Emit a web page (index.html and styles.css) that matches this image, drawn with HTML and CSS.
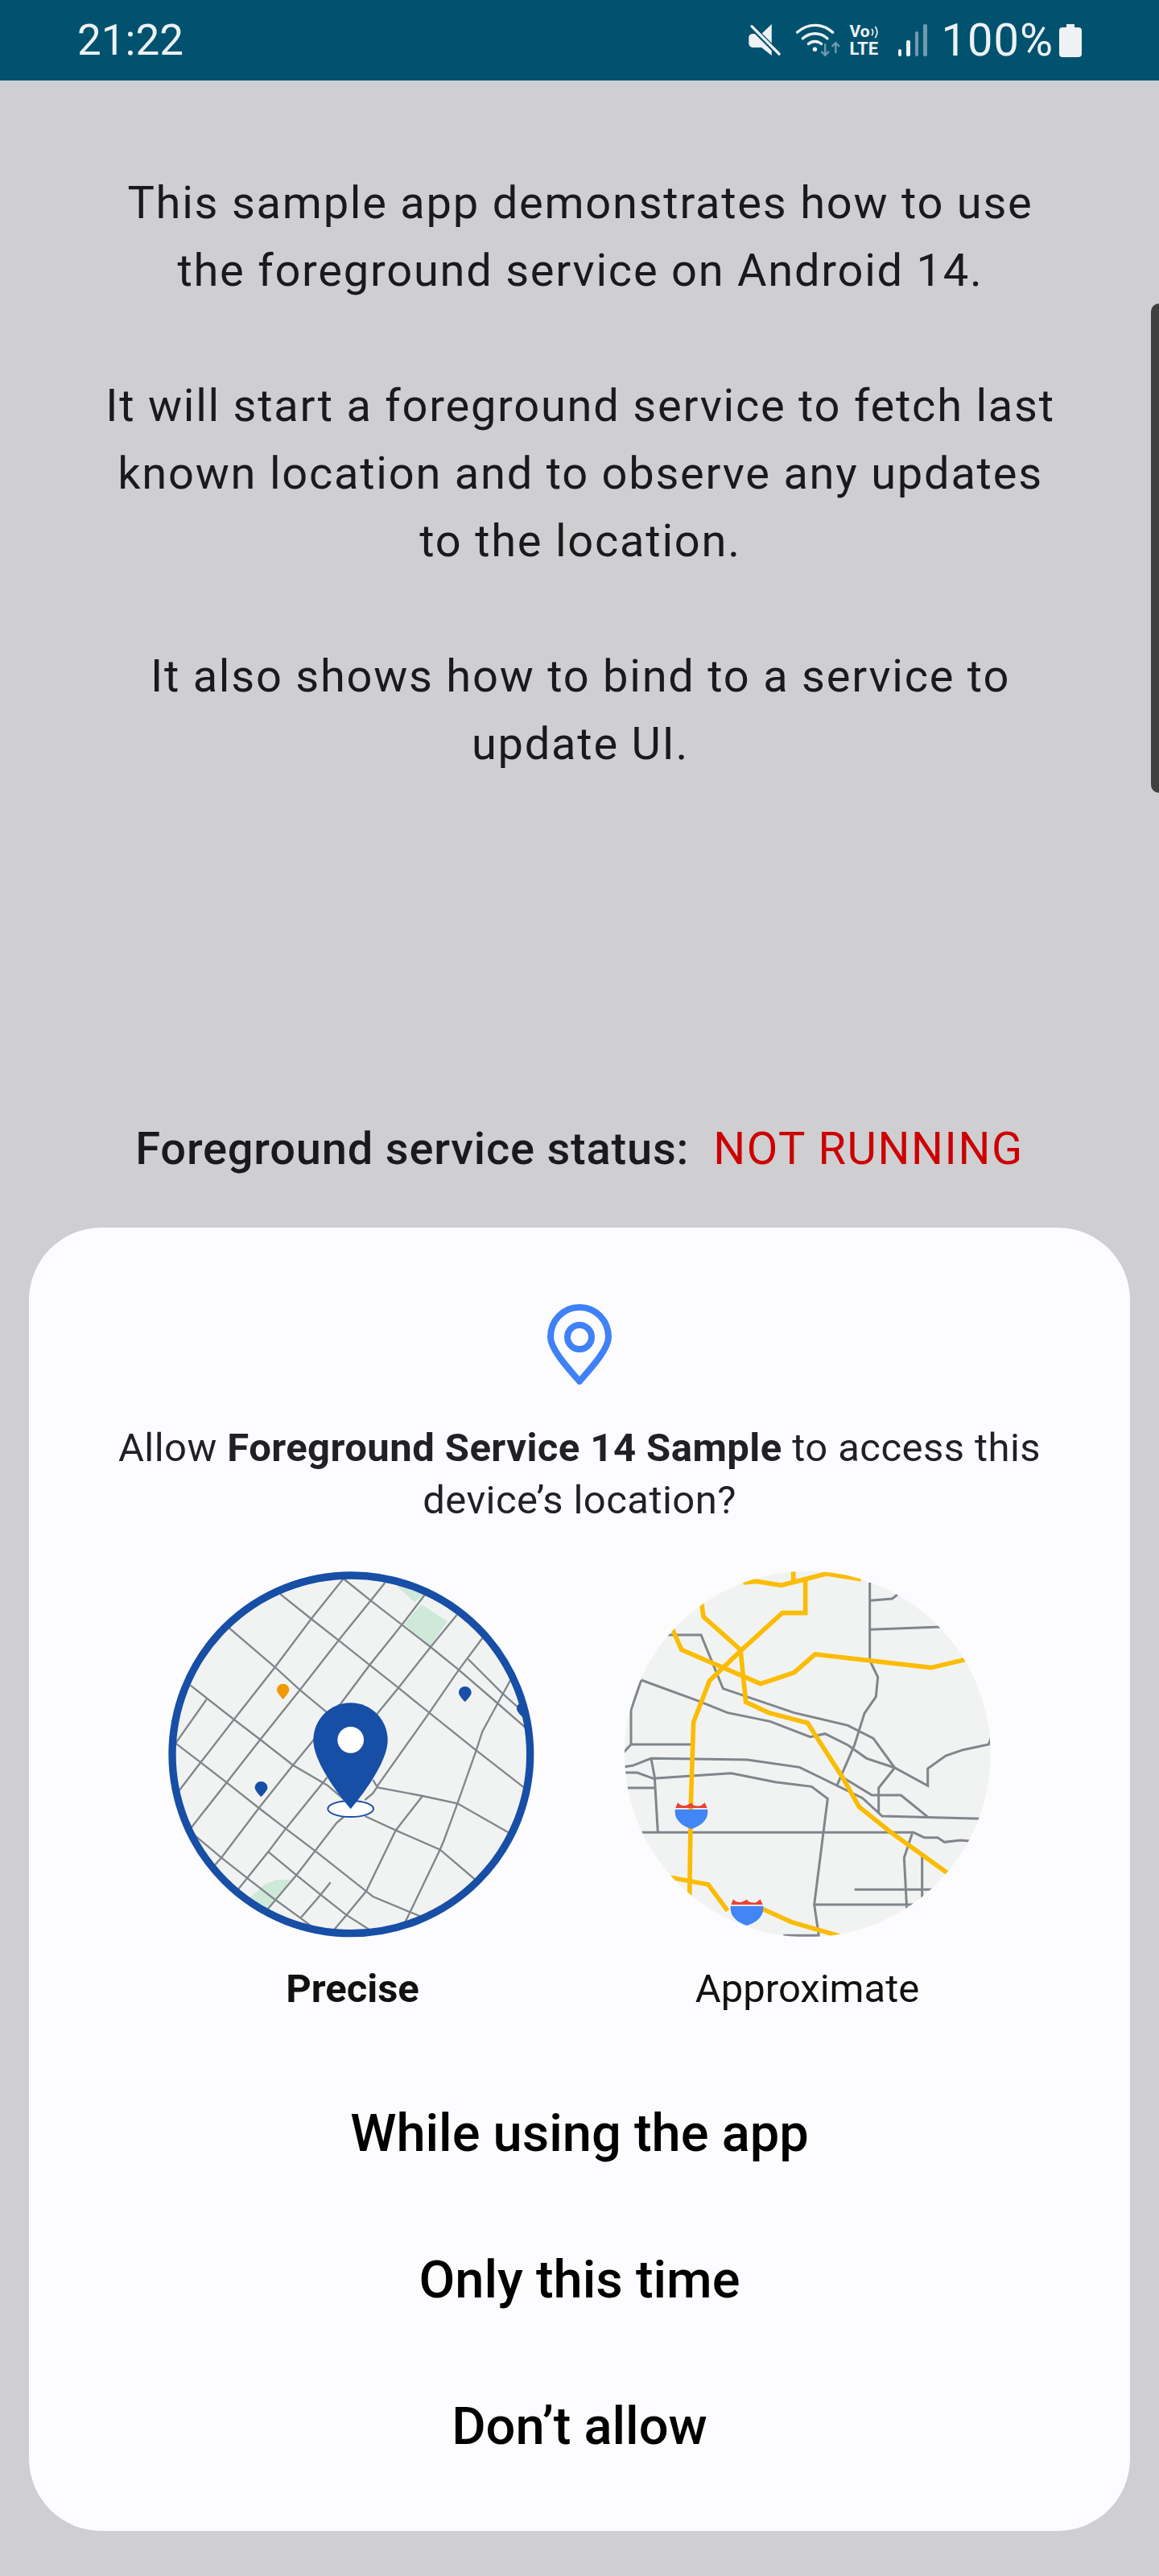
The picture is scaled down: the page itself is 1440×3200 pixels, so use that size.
FILE: index.html
```html
<!DOCTYPE html>
<html lang="en">
<head>
<meta charset="utf-8">
<title>Foreground Service 14 Sample</title>
<link rel="stylesheet" href="styles.css">
</head>
<body>
<div class="screen">
  <header class="statusbar">
    <span class="clock">21:22</span>
    <div class="status-icons">
      <svg class="ic-mute" viewBox="140 90 130 125"><path fill="#eef2f5" d="M230 92V210L192 180H160C150 180 144 172 144 164V142C144 134 150 128 160 128H192Z"/><path d="M150 98L258 205" stroke="#00526f" stroke-width="20"/><path d="M155 100L258 204" stroke="#eef2f5" stroke-width="10" stroke-linecap="round"/></svg>
      <svg class="ic-wifi" viewBox="320 90 170 125"><g fill="none" stroke="#eef2f5" stroke-width="10" stroke-linecap="round"><path d="M325 123C365 88 415 88 456 123"/><path d="M345 146C372 122 410 122 436 146"/><path d="M366 166C380 154 400 154 414 166"/></g><circle cx="390" cy="186" r="8" fill="#eef2f5"/><g fill="none" stroke="#6f9bb0" stroke-width="7"><path d="M428 165V208M414 194L428 208L442 194"/><path d="M467 200V162M453 176L467 162L481 176"/></g></svg>
      <div class="volte">
        <div class="volte-top"><span>Vo</span><svg class="ic-arcs" viewBox="0 0 14 20"><path d="M2 5C4 8 4 12 2 15M8 1C12 7 12 13 8 19" fill="none" stroke="#eef2f5" stroke-width="2.4" stroke-linecap="round"/></svg></div>
        <span class="volte-lte">LTE</span>
      </div>
      <div class="signal">
        <i class="bar bar-1"></i><i class="bar bar-2"></i><i class="bar bar-3"></i><i class="bar bar-4"></i>
      </div>
      <span class="battery-text">100%</span>
      <svg class="ic-battery" viewBox="0 0 28 41"><path fill="#eef2f5" d="M9 0H19V4H24C26.500 4 28 5.500 28 8V37C28 39.500 26.500 41 24 41H4C1.500 41 0 39.500 0 37V8C0 5.500 1.500 4 4 4H9Z"/></svg>
    </div>
  </header>

  <main class="content">
    <p class="intro">This sample app demonstrates how to use<br>the foreground service on Android 14.</p>
    <p class="intro">It will start a foreground service to fetch last<br>known location and to observe any updates<br>to the location.</p>
    <p class="intro">It also shows how to bind to a service to<br>update UI.</p>
    <p class="status"><span class="status-label">Foreground service status:</span><span class="status-value">NOT RUNNING</span></p>
  </main>

  <i class="scroll-handle"></i>

  <section class="dialog">
    <svg class="dialog-icon" viewBox="0 0 82 100"><path fill="none" stroke="#3f81f7" stroke-width="8" stroke-linejoin="round" d="M41 4C20 4 5 21 5 41C5 57 30 83 41 96C52 83 77 57 77 41C77 21 62 4 41 4Z"/><circle cx="41" cy="41" r="15" fill="none" stroke="#3f81f7" stroke-width="8"/></svg>
    <p class="dialog-title">Allow <b>Foreground Service 14 Sample</b> to access this<br>device’s location?</p>
    <div class="choices">
      <div class="choice">
        <svg class="map" viewBox="0 0 1500 1500">
          <defs><clipPath id="clipP"><circle cx="739" cy="745" r="667"/></clipPath></defs>
          <circle cx="739" cy="745" r="667" fill="#f1f3f2"/>
          <g clip-path="url(#clipP)">
            <g fill="#cfe9d9">
              <path d="M895 105L1012 150L975 178Z"/>
              <path d="M1000 185L1098 250L1035 340L935 260Z"/>
              <path d="M350 1290L415 1230L460 1212L512 1212L430 1325Z"/>
            </g>
            <g fill="none" stroke="#80868b" stroke-width="7">
              <path d="M710 90L812 172L1035 345L1140 430L1285 555L1400 655"/>
              <path d="M475 148L590 240L692 320L808 412L915 497L1030 590L1205 730L1395 878"/>
              <path d="M285 275L455 420L548 505L650 590"/>
              <path d="M140 488L302 615L400 690L522 785L650 860L720 920"/>
              <path d="M80 700L178 775L275 850L395 945L495 1022L605 1105L795 1255L820 1275L1000 1350"/>
              <path d="M150 1042L255 1130L350 1205L440 1275L550 1355L590 1385"/>
              <path d="M430 1108L535 1195L625 1268L720 1343L810 1400"/>
              <path d="M1175 390L1305 520L1395 600"/>
              <path d="M710 90L590 240L455 420L302 615L178 775L90 890"/>
              <path d="M865 105L812 172L692 320L548 505L400 690L275 850L135 1028"/>
              <path d="M1020 142L928 262L808 412L600 690L522 785L395 945L255 1130L220 1170"/>
              <path d="M1133 225L1035 345L915 497L835 595M650 830L495 1022L430 1108L310 1258"/>
              <path d="M1228 312L1140 430L1030 590L835 865L820 840"/>
              <path d="M790 915L820 890L835 868L1005 900L1135 928L1335 1042"/>
              <path d="M200 540L80 710"/>
              <path d="M1340 455L1285 555L1228 660L1205 730L1135 928L1085 1065L1070 1100L955 1340L935 1380"/>
              <path d="M1005 900L905 1028L795 1255L722 1343L670 1405"/>
              <path d="M790 975L905 1028L1070 1100L1205 1215"/>
              <path d="M715 975L685 1000L535 1195L425 1325"/>
              <path d="M662 1222L625 1268L550 1355"/>
            </g>
            <path fill="#174ea6" d="M1378 552C1366 552 1356 562 1356 575C1356 587 1378 606 1378 606C1378 606 1400 587 1400 575C1400 562 1390 552 1378 552Z"/>
          </g>
          <circle cx="739" cy="745" r="667" fill="none" stroke="#174ea6" stroke-width="28"/>
          <path fill="#f29900" d="M485 482C472 482 462 492 462 505C462 517 485 540 485 540C485 540 508 517 508 505C508 492 498 482 485 482Z"/>
          <path fill="#174ea6" d="M1163 492C1150 492 1140 502 1140 515C1140 527 1163 549 1163 549C1163 549 1187 527 1187 515C1187 502 1176 492 1163 492Z"/>
          <path fill="#174ea6" d="M403 846C390 846 380 856 380 869C380 881 403 903 403 903C403 903 427 881 427 869C427 856 416 846 403 846Z"/>
          <ellipse cx="737" cy="948" rx="85" ry="30" fill="#fff" stroke="#174ea6" stroke-width="6"/>
          <path fill="#174ea6" d="M737 553C660 553 598 615 598 692C598 790 737 948 737 948C737 948 875 790 875 692C875 615 813 553 737 553Z"/>
          <circle cx="737" cy="691" r="49" fill="#fff"/>
        </svg>
        <span class="choice-label selected">Precise</span>
      </div>
      <div class="choice">
        <svg class="map" viewBox="0 0 1500 1500">
          <defs>
            <clipPath id="clipA"><circle cx="730" cy="744" r="682"/></clipPath>
            <g id="shield">
              <path fill="#ea4335" d="M238 945L246 925C256 936 268 938 278 935L297 926C304 938 322 940 334 935L347 925L356 945Z"/>
              <path fill="#4285f4" d="M236 950H358V960C358 990 332 1012 297 1023C262 1012 236 990 236 960Z"/>
            </g>
          </defs>
          <circle cx="730" cy="744" r="682" fill="#f1f3f2"/>
          <g clip-path="url(#clipA)">
            <g fill="none" stroke="#80868b" stroke-width="9">
              <path d="M962 105V395L992 457L985 530L942 592L905 710L840 860"/>
              <path d="M962 172L1045 165L1065 150"/>
              <path d="M962 280L1225 270"/>
              <path d="M210 300H333L415 500L680 590L880 637L975 685L1055 795L995 870V965"/>
              <path d="M110 468L320 545L432 590L590 622L740 680L795 668L880 710L950 760L1055 795L1178 862V798L1245 750L1310 728L1405 708L1415 680"/>
              <path d="M295 708H72V580L110 468M72 708L45 737"/>
              <path d="M45 792L78 787L147 760L505 765L700 793L935 908L1008 975L1375 985"/>
              <path d="M147 760L160 830L172 1036"/>
              <path d="M45 813H95L155 835L445 815L610 848L745 865L805 910L755 1305L772 1420"/>
              <path d="M55 870H160"/>
              <path d="M110 1036H1125L1165 1055H1215L1240 1072L1300 1065L1335 1068"/>
              <path d="M860 830L970 897H1078L1180 980"/>
              <path d="M1120 1040L1090 1130L1100 1320"/>
              <path d="M1157 1125V1280"/>
              <path d="M905 1249H1195"/>
              <path d="M755 1305H1125"/>
              <path d="M640 1420H775"/>
            </g>
            <g fill="none" stroke="#fbbc04" stroke-width="17">
              <path d="M490 105L540 100L632 115L800 72L930 92"/>
              <path d="M677 55V100"/>
              <path d="M722 95V218H636L485 355L365 470L305 625L295 930L290 1280"/>
              <path d="M335 180L342 232L480 355L500 550L585 590L730 628L860 830L922 940L1040 1035L1255 1190"/>
              <path d="M225 275L260 355L555 482L680 440L758 372L1190 422L1325 390"/>
              <path d="M215 1203L360 1230L432 1328"/>
              <path d="M560 1320L670 1370L850 1422"/>
            </g>
          </g>
          <use href="#shield"/>
          <use href="#shield" x="207" y="360"/>
        </svg>
        <span class="choice-label label-approx">Approximate</span>
      </div>
    </div>
    <div class="actions">
      <span class="action">While using the app</span>
      <span class="action">Only this time</span>
      <span class="action">Don’t allow</span>
    </div>
  </section>
</div>
</body>
</html>
```

FILE: styles.css
```css
* { box-sizing: border-box; }
html, body { margin: 0; padding: 0; }
body { background: #cfcfd1; font-family: Roboto, "Liberation Sans", sans-serif; }
.screen { position: relative; width: 1440px; height: 3200px; overflow: hidden; display: flex; flex-direction: column; background: #cfcfd1; }

.statusbar { height: 100px; flex: none; background: #00526f; color: #eef2f5; display: flex; justify-content: space-between; align-items: center; padding: 0 96px 0 96px; }
.clock { font-size: 53px; line-height: 100px; font-weight: 400; }
.status-icons { display: flex; align-items: center; height: 100px; }
.status-icons svg { display: block; flex: none; }
.ic-mute { width: 43px; height: 42px; }
.ic-wifi { width: 57px; height: 42px; margin-left: 17px; }
.volte { margin-left: 10px; width: 42px; height: 42px; display: flex; flex-direction: column; font-weight: 700; font-size: 21px; line-height: 21px; }
.volte-top { display: flex; align-items: center; height: 21px; gap: 1px; }
.volte-lte { font-size: 22px; line-height: 21px; }
.ic-arcs { width: 10px; height: 18px; }
.signal { margin-left: 18px; width: 36px; height: 40px; display: flex; align-items: flex-end; justify-content: space-between; }
.bar { display: block; width: 4.500px; border-radius: 2px; background: #eef2f5; }
.bar-1 { height: 9px; }
.bar-2 { height: 20px; }
.bar-3 { height: 31px; background: #6f9bb0; }
.bar-4 { height: 40px; background: #6f9bb0; }
.battery-text { margin-left: 18px; font-size: 56px; font-weight: 400; line-height: 100px; letter-spacing: 1px; }
.ic-battery { width: 28px; height: 41px; margin-left: 7px; }

.content { flex: 1; display: flex; flex-direction: column; align-items: center; padding-top: 110px; }
.intro { margin: 0 0 84px; padding-left: 2px; font-size: 56px; line-height: 84px; letter-spacing: 1.760px; text-align: center; color: #1a1a1c; }
.status { margin: 347px 0 0; font-size: 56px; line-height: 60px; display: flex; gap: 30px; }
.status-label { font-weight: 500; color: #1a1a1c; letter-spacing: 0.800px; }
.status-value { color: #cc0000; letter-spacing: 1.600px; }

.scroll-handle { position: absolute; right: 0; top: 377px; width: 10px; height: 608px; background: #404040; border-radius: 10px 0 0 10px; }

.dialog { position: absolute; left: 36px; top: 1525px; width: 1368px; height: 1619px; background: #fcfcff; border-radius: 90px; display: flex; flex-direction: column; align-items: center; padding-top: 95px; }
.dialog-icon { width: 82px; height: 100px; display: block; }
.dialog-title { margin: 46px 0 0; font-size: 49px; line-height: 65px; letter-spacing: 0.450px; text-align: center; color: #202124; }
.dialog-title b { font-weight: 700; }
.choices { display: flex; justify-content: center; gap: 70px; margin-top: 35px; margin-left: 10px; }
.choice { width: 500px; display: flex; flex-direction: column; align-items: center; }
.map { display: block; width: 500px; height: 500px; }
.choice-label { margin-top: 10px; padding-right: 4px; font-size: 49px; line-height: 60px; color: #111; }
.choice-label.selected { font-weight: 700; }
.choice-label.label-approx { padding-right: 14px; }
.actions { display: flex; flex-direction: column; align-items: center; margin-top: 58px; }
.action { height: 182px; line-height: 182px; font-size: 65px; font-weight: 500; color: #000; }
```
